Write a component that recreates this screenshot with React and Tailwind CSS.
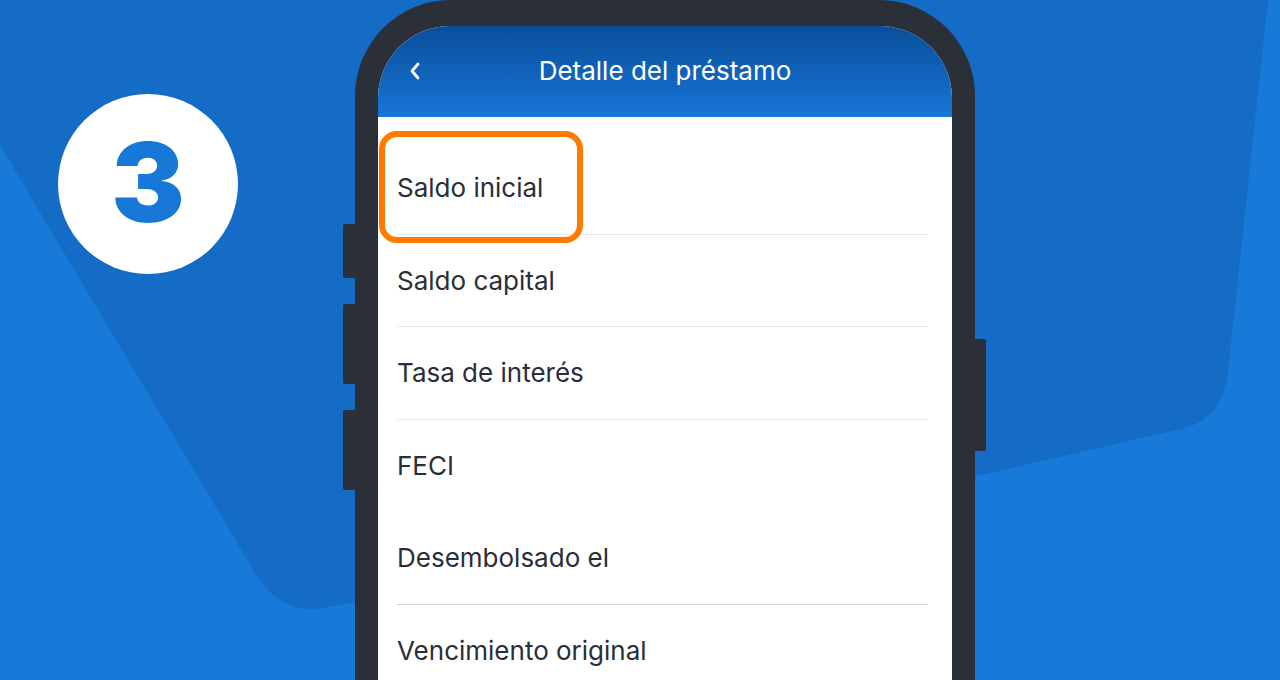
const rows = [
  { label: "Saldo inicial", line: "border-[#e8e9ec]" },
  { label: "Saldo capital", line: "border-[#e8e9ec]" },
  { label: "Tasa de interés", line: "border-[#e8e9ec]" },
  { label: "FECI", line: "border-transparent" },
  { label: "Desembolsado el", line: "border-[#d3d5da]" },
  { label: "Vencimiento original", line: "border-transparent" },
];

const Backdrop = () => (
  <svg
    className="absolute inset-0"
    width="1280"
    height="680"
    viewBox="0 0 1280 680"
  >
    <path
      d="M0,0 L1268,0 L1228,372 Q1222,418 1185,428 L700,540 L322,608 Q282,614 258,578 L0,145 Z"
      fill="#146cc6"
    />
  </svg>
);

const Phone = () => (
  <div className="flex items-start">
    <div className="flex flex-col w-[12px] pt-[224px]">
      <div className="h-[54px] bg-[#2b2f38] rounded-l-[2px]" />
      <div className="h-[80px] mt-[26px] bg-[#2b2f38] rounded-l-[2px]" />
      <div className="h-[80px] mt-[26px] bg-[#2b2f38] rounded-l-[2px]" />
    </div>
    <div className="w-[620px] h-[720px] bg-[#2b2f38] rounded-t-[96px] pt-[26px] px-[23px]">
      <div className="relative h-full bg-white rounded-t-[72px] overflow-hidden">
        <div className="h-[91px] bg-gradient-to-b from-[#0a4e9b] to-[#1676d6] flex items-center relative">
          <svg
            className="absolute left-[31px] top-[35px]"
            width="12"
            height="20"
            viewBox="0 0 12 20"
          >
            <path
              d="M9 3 L3 10 L9 17"
              fill="none"
              stroke="white"
              strokeWidth="2.8"
              strokeLinecap="round"
              strokeLinejoin="round"
            />
          </svg>
          <h1 className="w-full text-center text-white text-[26px] font-normal pb-[2px]">
            Detalle del préstamo
          </h1>
        </div>
        <div className="pt-[25px] pl-[19px] pr-[24px]">
          {rows.map((r) => (
            <div
              key={r.label}
              className={`h-[92.5px] flex items-center border-b ${r.line}`}
            >
              <span className="text-[26px] text-[#2a2e37]">{r.label}</span>
            </div>
          ))}
        </div>
        <div className="absolute left-[1px] top-[105px] w-[204px] h-[112px] border-[6px] border-[#ff7b00] rounded-[18px]" />
      </div>
    </div>
    <div className="w-[11px] pt-[339px]">
      <div className="h-[112px] bg-[#2b2f38] rounded-r-[2px]" />
    </div>
  </div>
);

export default function App() {
  return (
    <div
      className="relative w-[1280px] h-[680px] overflow-hidden bg-[#177ad9]"
      style={{ fontFamily: "Inter, 'Noto Sans', sans-serif" }}
    >
      <Backdrop />
      <div className="relative flex items-start pl-[58px]">
        <div className="mt-[94px] w-[180px] h-[180px] rounded-full bg-white flex items-center justify-center">
          <span className="text-[110px] leading-none font-black text-[#1778d8] pb-[4px]">
            3
          </span>
        </div>
        <div className="ml-[105px]">
          <Phone />
        </div>
      </div>
    </div>
  );
}
